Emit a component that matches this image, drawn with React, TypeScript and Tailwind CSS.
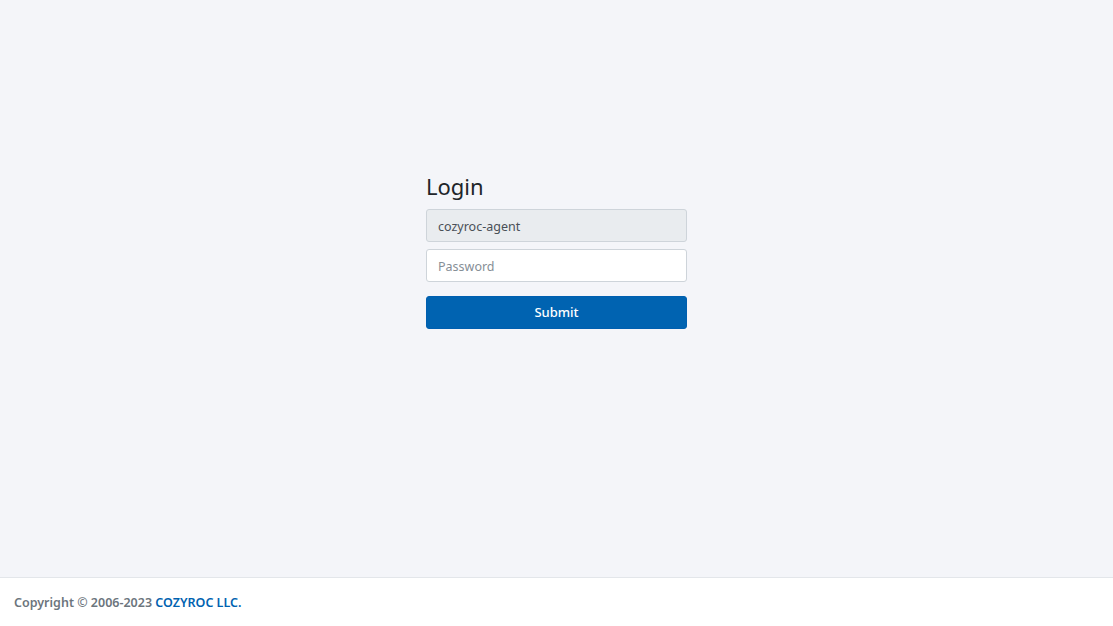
export default function App() {
    return (
        <div
            className="flex h-[626px] flex-col bg-[#f4f5f9]"
            style={{ fontFamily: '"Source Sans Pro", "Noto Sans", Lato, sans-serif' }}
        >
            <main className="flex flex-1 items-start justify-center pt-[171px]">
                <form className="w-[261px]" onSubmit={(e) => e.preventDefault()}>
                    <h1 className="mb-[8px] text-[22px] leading-[30px] text-[#212529]">Login</h1>
                    <input
                        type="text"
                        value="cozyroc-agent"
                        readOnly
                        className="block h-[33px] w-full rounded-[3px] border border-[#ced4da] bg-[#e9ecef] px-[11px] pt-px text-[12.5px] text-[#495057] outline-none"
                    />
                    <input
                        type="password"
                        placeholder="Password"
                        className="mt-[7px] block h-[33px] w-full rounded-[3px] border border-[#ced4da] bg-white px-[11px] pt-px text-[12.5px] text-[#495057] outline-none placeholder:text-[#868e96]"
                    />
                    <button
                        type="submit"
                        className="mt-[14px] block h-[33px] w-full rounded-[3px] border border-[#005fb0] bg-[#0063b1] text-[13px] font-medium text-white"
                    >
                        Submit
                    </button>
                </form>
            </main>
            <footer className="flex h-[49px] items-center border-t border-[#e3e6ea] bg-white px-[14px] pt-[2px] text-[12.5px] font-semibold text-[#6c757d]">
                <span>
                    Copyright © 2006-2023{' '}
                    <a href="#" className="text-[#0062b0]">
                        COZYROC LLC.
                    </a>
                </span>
            </footer>
        </div>
    );
}
